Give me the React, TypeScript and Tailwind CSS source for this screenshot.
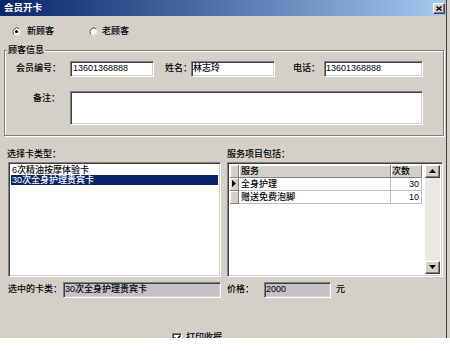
import React from 'react';

const sunken =
  'border border-t-[#808080] border-l-[#808080] border-b-white border-r-white shadow-[inset_1px_1px_0_#404040,inset_-1px_-1px_0_#d4d0c8]';
const raised =
  'border border-t-white border-l-white border-b-[#404040] border-r-[#404040] shadow-[inset_-1px_-1px_0_#808080] bg-[#d4d0c8]';

function Radio({ checked }: { checked?: boolean }) {
  return (
    <svg width="9" height="9" viewBox="0 0 9 9" className="shrink-0">
      <circle cx="4.5" cy="4.5" r="4" fill="white" />
      <path d="M1.7 7.3 A4 4 0 0 1 7.3 1.7" stroke="#404040" strokeWidth="1" fill="none" />
      <path d="M7.3 1.7 A4 4 0 0 1 1.7 7.3" stroke="#d4d0c8" strokeWidth="1" fill="none" />
      {checked && <circle cx="4.5" cy="4.5" r="1.6" fill="black" />}
    </svg>
  );
}

function Arrow({ up }: { up?: boolean }) {
  return (
    <svg width="7" height="4" viewBox="0 0 7 4">
      <path d={up ? 'M3.5 0 L7 4 L0 4 Z' : 'M0 0 L7 0 L3.5 4 Z'} fill="black" />
    </svg>
  );
}

export default function App() {
  return (
    <div className="w-[450px] h-[351px] bg-white overflow-hidden whitespace-nowrap font-['Liberation_Sans','Noto_Sans_CJK_SC',sans-serif] font-medium text-[9px] text-black">
      <div className="h-[338px] flex bg-[#d4d0c8]">
        <div className="w-[447px] h-full border-r border-[#404040] overflow-hidden flex flex-col">
          {/* title bar */}
          <div className="h-[16px] shrink-0 flex items-center justify-between pl-[4px] pr-[1px] bg-gradient-to-r from-[#0a246a] to-[#a6caf0]">
            <span className="text-white font-bold text-[9.5px]">会员开卡</span>
            <div className={`${raised} w-[12px] h-[11px] flex items-center justify-center`}>
              <svg width="6" height="5" viewBox="0 0 6 5">
                <path d="M0.5 0.5 L5.5 4.5 M5.5 0.5 L0.5 4.5" stroke="black" strokeWidth="1.4" />
              </svg>
            </div>
          </div>

          {/* customer type */}
          <div className="mt-[9px] h-[14px] flex items-center pl-[12px]">
            <Radio checked />
            <span className="ml-[6px]">新顾客</span>
            <div className="ml-[35px] flex items-center">
              <Radio />
              <span className="ml-[4px]">老顾客</span>
            </div>
          </div>

          {/* customer info group */}
          <div className="relative mt-[11px] ml-[4px] w-[440px] h-[86px] shrink-0 border border-[#808080] shadow-[inset_1px_1px_0_white,1px_1px_0_white] pt-[10px]">
            <span className="absolute -top-[7px] left-[2px] px-[1px] bg-[#d4d0c8] leading-[12px]">顾客信息</span>
            <div className="flex items-center h-[16px] pl-[11px]">
              <span className="w-[54px]">会员编号：</span>
              <div className={`${sunken} bg-white w-[84px] h-[16px] flex items-center px-[2px]`}>13601368888</div>
              <span className="ml-[11px] w-[26px]">姓名：</span>
              <div className={`${sunken} bg-white w-[84px] h-[16px] flex items-center px-[1px]`}>林志玲</div>
              <span className="ml-[18px] w-[31px]">电话：</span>
              <div className={`${sunken} bg-white w-[99px] h-[16px] flex items-center px-[1px]`}>13601368888</div>
            </div>
            <div className="flex items-start mt-[14px] pl-[28px]">
              <span className="w-[37px] leading-[12px] pt-[1px]">备注：</span>
              <div className={`${sunken} bg-white w-[353px] h-[34px]`} />
            </div>
          </div>

          {/* card types + services */}
          <div className="flex mt-[12px]">
            <div className="ml-[7px] w-[214px] flex flex-col">
              <span className="h-[14px] leading-[12px]">选择卡类型：</span>
              <div className={`${sunken} bg-white ml-[1px] w-[213px] h-[115px] p-[2px] flex flex-col`}>
                <div className="h-[10px] leading-[10px] px-[1px]">6次精油按摩体验卡</div>
                <div className="h-[10px] leading-[10px] px-[1px] bg-[#0a246a] text-white">30次全身护理贵宾卡</div>
              </div>
            </div>
            <div className="ml-[6px] w-[216px] flex flex-col">
              <span className="h-[14px] leading-[12px]">服务项目包括：</span>
              <div className={`${sunken} bg-white w-[216px] h-[115px] p-[2px] flex`}>
                <div className="flex-1 flex flex-col">
                  <div className="flex h-[13px]">
                    <div className="w-[9px] bg-[#d4d0c8] border-r border-b border-[#808080] shadow-[inset_1px_1px_0_white]" />
                    <div className="w-[152px] bg-[#d4d0c8] border-r border-b border-[#808080] shadow-[inset_1px_1px_0_white] leading-[12px] px-[2px]">服务</div>
                    <div className="w-[31px] bg-[#d4d0c8] border-r border-b border-[#808080] shadow-[inset_1px_1px_0_white] leading-[12px] px-[1px]">次数</div>
                  </div>
                  {[
                    ['全身护理', '30'],
                    ['赠送免费泡脚', '10'],
                  ].map(([name, count], i) => (
                    <div key={name} className="flex h-[13px]">
                      <div className="w-[9px] bg-[#d4d0c8] border-r border-b border-[#808080] shadow-[inset_1px_1px_0_white] flex items-center justify-center">
                        {i === 0 && (
                          <svg width="4" height="7" viewBox="0 0 4 7">
                            <path d="M0 0 L4 3.5 L0 7 Z" fill="black" />
                          </svg>
                        )}
                      </div>
                      <div className="w-[152px] border-r border-b border-[#c0c0c0] leading-[12px] px-[2px]">{name}</div>
                      <div className="w-[31px] border-r border-b border-[#c0c0c0] leading-[12px] px-[2px] text-right">{count}</div>
                    </div>
                  ))}
                </div>
                <div className="w-[15px] bg-[#ebe9e4] flex flex-col justify-between">
                  <div className={`${raised} h-[13px] flex items-center justify-center`}>
                    <Arrow up />
                  </div>
                  <div className={`${raised} h-[13px] flex items-center justify-center`}>
                    <Arrow />
                  </div>
                </div>
              </div>
            </div>
          </div>

          {/* selected card + price */}
          <div className="flex items-center mt-[5px] h-[16px]">
            <span className="ml-[8px] w-[55px]">选中的卡类：</span>
            <div className={`${sunken} bg-[#c2c2c8] w-[158px] h-[16px] flex items-center px-[1px]`}>30次全身护理贵宾卡</div>
            <span className="ml-[6px] w-[37px]">价格：</span>
            <div className={`${sunken} bg-[#c2c2c8] w-[67px] h-[16px] flex items-center px-[1px]`}>2000</div>
            <span className="ml-[5px]">元</span>
          </div>

          {/* print receipt */}
          <div className="flex items-center mt-[34px] ml-[172px] h-[13px] shrink-0">
            <div className={`${sunken} bg-white w-[10px] h-[10px] flex items-center justify-center`}>
              <svg width="7" height="6" viewBox="0 0 7 6">
                <path d="M0.5 2.5 L2.5 4.5 L6.5 0.5" stroke="black" strokeWidth="1.4" fill="none" />
              </svg>
            </div>
            <span className="ml-[4px]">打印收据</span>
          </div>
        </div>
      </div>
      <div className="h-[13px] bg-white" />
    </div>
  );
}
